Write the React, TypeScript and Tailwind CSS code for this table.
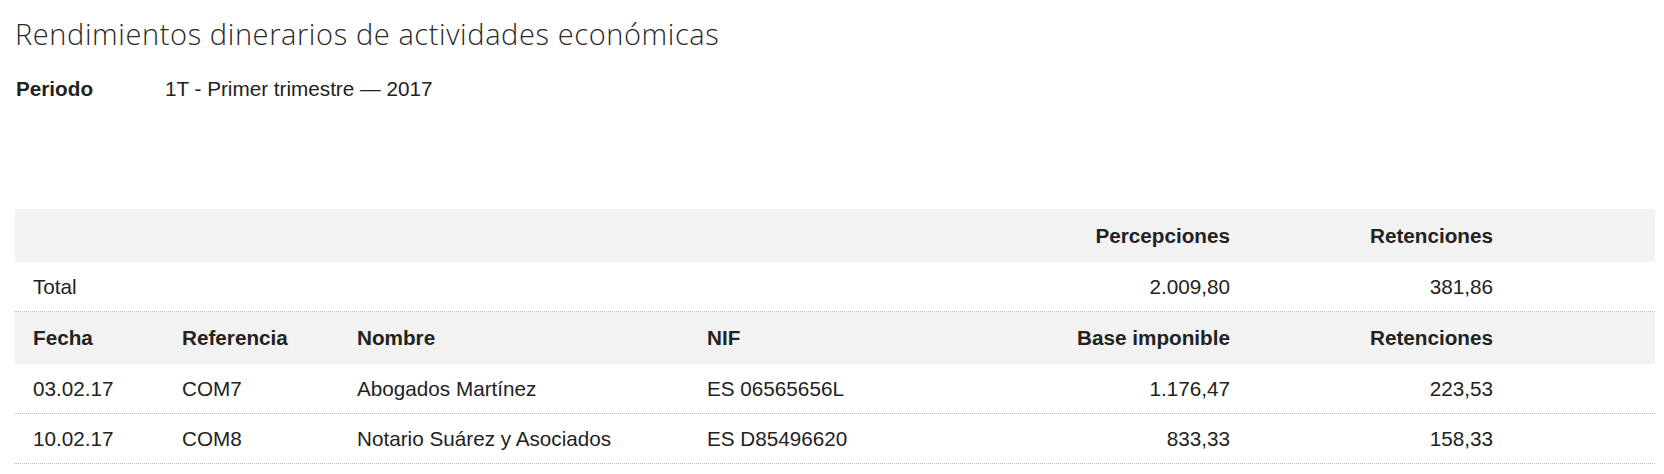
import React from 'react';

const cols = 'grid grid-cols-[149px_175px_350px_1fr_263px_263px_144px] items-center';

const rows = [
  { fecha: '03.02.17', ref: 'COM7', nombre: 'Abogados Martínez', nif: 'ES 06565656L', base: '1.176,47', ret: '223,53' },
  { fecha: '10.02.17', ref: 'COM8', nombre: 'Notario Suárez y Asociados', nif: 'ES D85496620', base: '833,33', ret: '158,33' },
];

const App = () => {
  return (
    <div className="min-h-screen bg-white text-[#222] font-['Liberation_Sans',Arial,sans-serif] pl-[15px] pr-[9px]">
      {/* Cabecera */}
      <h1 className="pt-[17px] text-[29px] leading-[34px] tracking-[0.6px] font-light text-[#2a2a2a] font-['Open_Sans','Lato',sans-serif]">
        Rendimientos dinerarios de actividades económicas
      </h1>
      <div className="mt-[26px] flex text-[20.7px] leading-[24px]">
        <span className="w-[150px] pl-[1px] font-bold">Periodo</span>
        <span>1T - Primer trimestre — 2017</span>
      </div>

      {/* Tabla */}
      <div className="mt-[108px] text-[20.7px] leading-[24px]">
        <div className={`${cols} h-[53px] bg-[#f2f2f2] font-bold`}>
          <div />
          <div />
          <div />
          <div />
          <div className="text-right pr-[18px]">Percepciones</div>
          <div className="text-right pr-[18px]">Retenciones</div>
          <div />
        </div>
        <div className={`${cols} h-[50px] border-b border-dotted border-[#bbb]`}>
          <div className="pl-[18px]">Total</div>
          <div />
          <div />
          <div />
          <div className="text-right pr-[18px]">2.009,80</div>
          <div className="text-right pr-[18px]">381,86</div>
          <div />
        </div>
        <div className={`${cols} h-[52px] bg-[#f2f2f2] font-bold`}>
          <div className="pl-[18px]">Fecha</div>
          <div className="pl-[18px]">Referencia</div>
          <div className="pl-[18px]">Nombre</div>
          <div className="pl-[18px]">NIF</div>
          <div className="text-right pr-[18px]">Base imponible</div>
          <div className="text-right pr-[18px]">Retenciones</div>
          <div />
        </div>
        {rows.map((r, i) => (
          <div key={i} className={`${cols} h-[50px] border-b border-dotted border-[#bbb]`}>
            <div className="pl-[18px]">{r.fecha}</div>
            <div className="pl-[18px]">{r.ref}</div>
            <div className="pl-[18px]">{r.nombre}</div>
            <div className="pl-[18px]">{r.nif}</div>
            <div className="text-right pr-[18px]">{r.base}</div>
            <div className="text-right pr-[18px]">{r.ret}</div>
            <div />
          </div>
        ))}
      </div>
    </div>
  );
};

export default App;
